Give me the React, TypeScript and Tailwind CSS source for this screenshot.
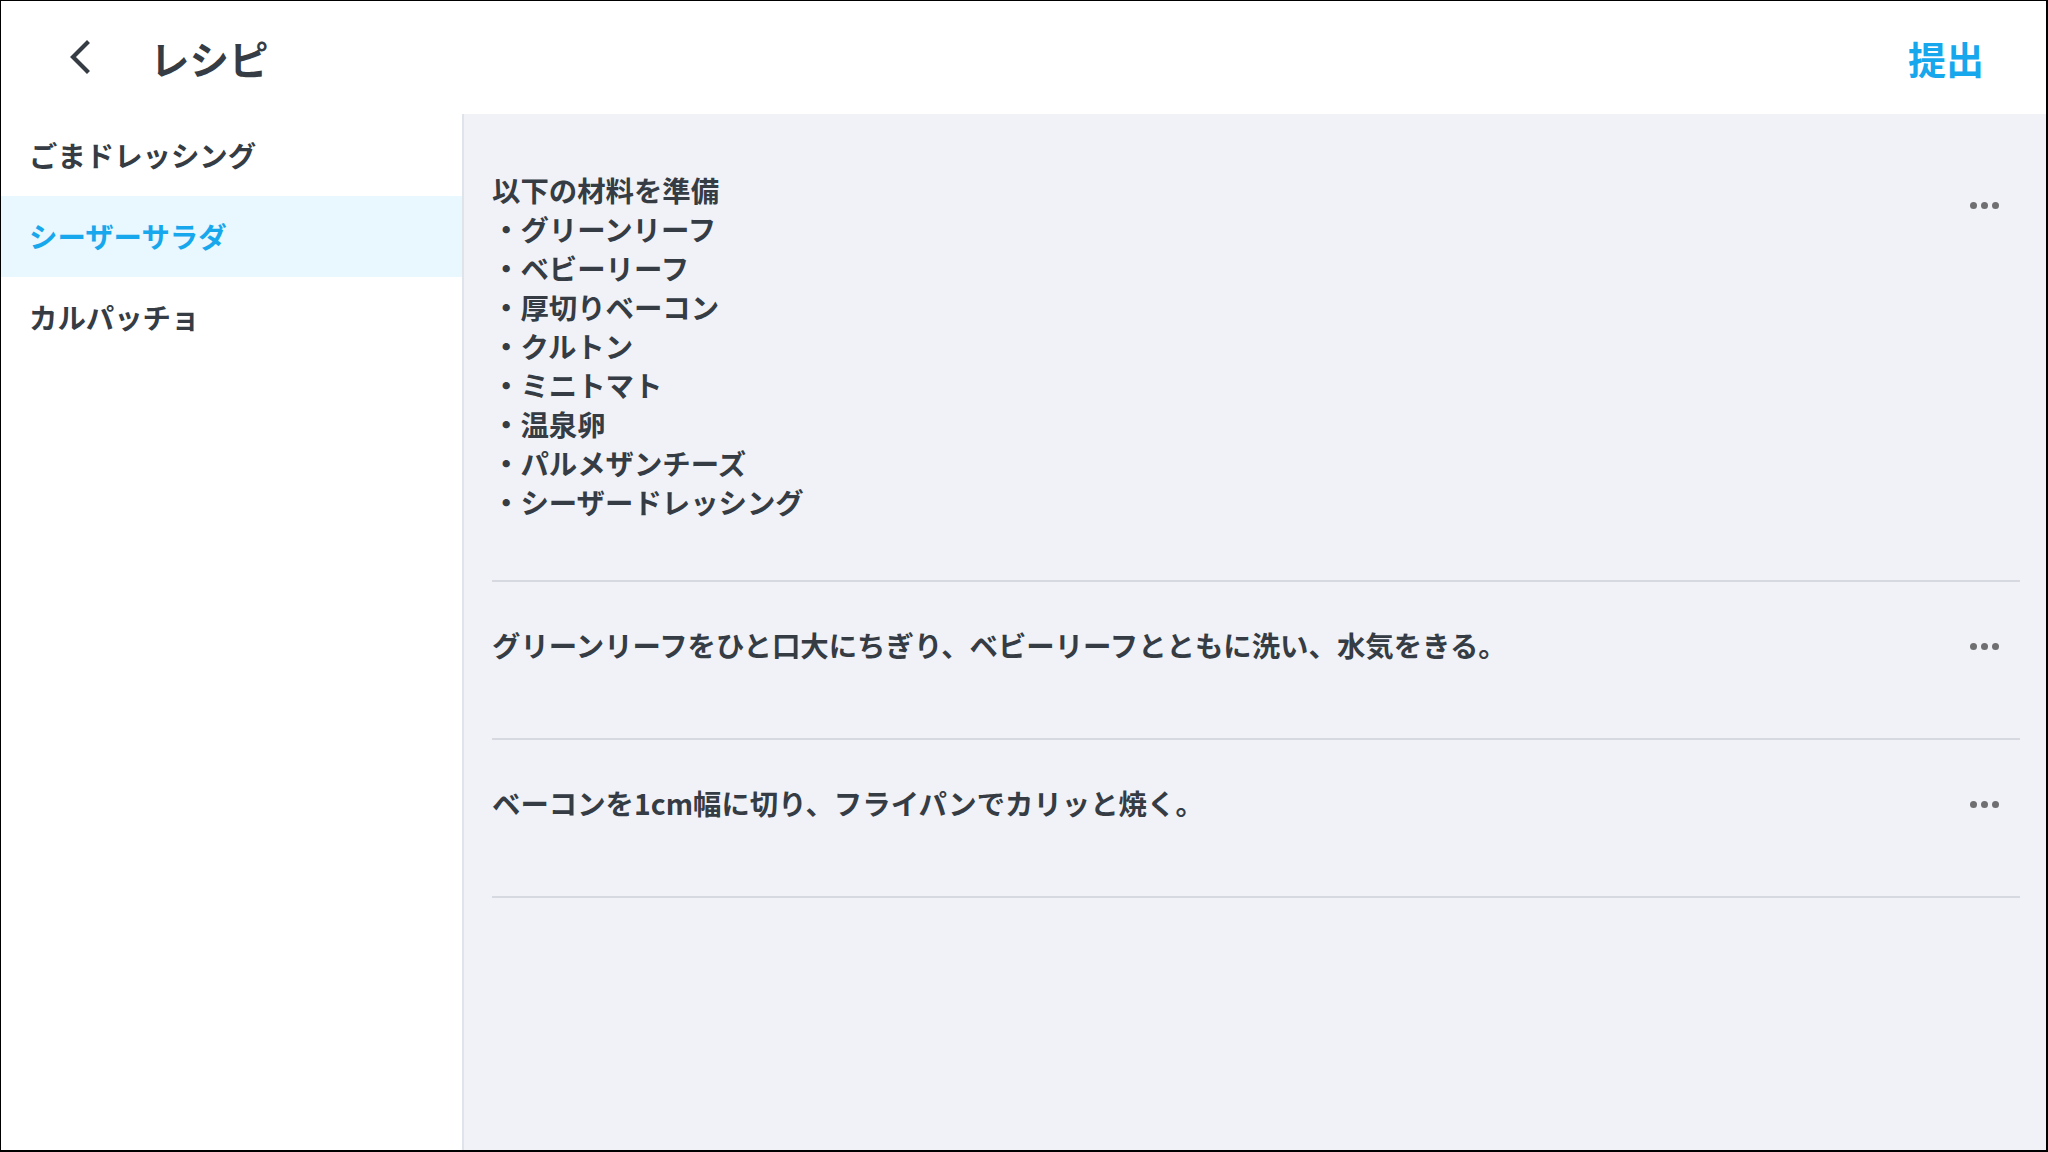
import React from "react";

const font = { fontFamily: '"Noto Sans CJK JP", "Noto Sans", sans-serif' };

function Dots({ mt }: { mt: string }) {
  return (
    <div className={`flex shrink-0 self-start items-center gap-[4px] mr-[21px] ${mt}`}>
      <span className="block h-[7px] w-[7px] rounded-full bg-[#6f6f72]" />
      <span className="block h-[7px] w-[7px] rounded-full bg-[#6f6f72]" />
      <span className="block h-[7px] w-[7px] rounded-full bg-[#6f6f72]" />
    </div>
  );
}

export default function App() {
  const ingredients = [
    "グリーンリーフ",
    "ベビーリーフ",
    "厚切りベーコン",
    "クルトン",
    "ミニトマト",
    "温泉卵",
    "パルメザンチーズ",
    "シーザードレッシング",
  ];
  const items = ["ごまドレッシング", "シーザーサラダ", "カルパッチョ"];
  return (
    <div
      className="flex h-[1152px] w-[2048px] flex-col border-l border-t border-r-2 border-b-2 border-black bg-white text-[#363c44]"
      style={font}
    >
      <header className="flex h-[113px] shrink-0 items-center justify-between bg-white pl-[66px] pr-[62px]">
        <div className="flex items-center">
          <svg width="26" height="34" viewBox="0 0 26 34" className="mt-[-2px]">
            <path d="M20 3 L6 17 L20 31" fill="none" stroke="#363c44" strokeWidth="4.2" strokeLinecap="square" />
          </svg>
          <h1 className="ml-[57px] text-[39.5px] font-bold leading-none">レシピ</h1>
        </div>
        <button className="text-[38px] font-bold leading-none text-[#17a7ec]">提出</button>
      </header>
      <div className="flex min-h-0 flex-1">
        <aside className="w-[463px] shrink-0 border-r-2 border-[#dfe3ea] bg-white">
          {items.map((it, i) => (
            <div
              key={it}
              className={`flex items-center pl-[28px] text-[28.4px] font-bold ${
                i === 0 ? "h-[82px]" : "h-[81px]"
              } ${i === 1 ? "bg-[#e9f7fe] text-[#17a7ec]" : "text-[#363c44]"}`}
            >
              {it}
            </div>
          ))}
        </aside>
        <main className="flex-1 bg-[#f0f2f7] pl-[28px] pr-[26px]">
          <div className="flex justify-between border-b-2 border-[#d6d9df] pt-[56px] pb-[59px]">
            <div className="text-[28.4px] font-bold leading-[39px]">
              <div>以下の材料を準備</div>
              {ingredients.map((x) => (
                <div key={x}>・{x}</div>
              ))}
            </div>
            <Dots mt="mt-[32px]" />
          </div>
          <div className="flex justify-between border-b-2 border-[#d6d9df] pt-[43px] pb-[74px]">
            <div className="text-[28.4px] font-bold leading-[39px]">
              グリーンリーフをひと口大にちぎり、ベビーリーフとともに洗い、水気をきる。
            </div>
            <Dots mt="mt-[18px]" />
          </div>
          <div className="flex justify-between border-b-2 border-[#d6d9df] pt-[43px] pb-[74px]">
            <div className="text-[28.4px] font-bold leading-[39px]">
              ベーコンを1cm幅に切り、フライパンでカリッと焼く。
            </div>
            <Dots mt="mt-[18px]" />
          </div>
        </main>
      </div>
    </div>
  );
}
